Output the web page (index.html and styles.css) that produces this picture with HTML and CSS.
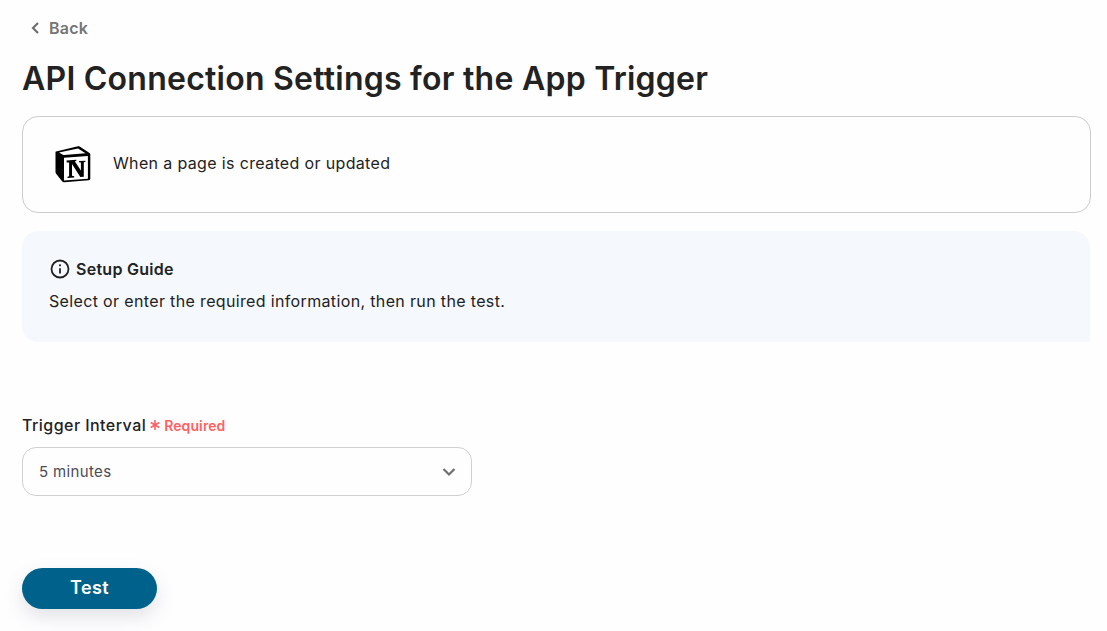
FILE: index.html
```html
<!DOCTYPE html>
<html lang="en">
<head>
<meta charset="utf-8">
<title>API Connection Settings</title>
<link rel="stylesheet" href="styles.css">
</head>
<body>
<main class="page">
  <a class="back">
    <svg class="back-icon" viewBox="0 0 10 14" width="10" height="14"><path d="M8 2 3 7l5 5" fill="none" stroke="#6f6f6f" stroke-width="2.200"/></svg>
    <span>Back</span>
  </a>
  <h1 class="title">API Connection Settings for the App Trigger</h1>
  <section class="app-card">
    <svg class="notion" viewBox="0 0 38 39" width="38" height="39">
      <path d="M2 6.500 24 1.300c.6-.1 1.200 0 1.700.3l9.800 6.400c.6.400.8.900.8 1.500v24c0 1-.6 1.600-1.500 1.700l-24.500 2c-.9.100-1.500-.1-2-.7l-6-7.500C1.800 28.300 1.500 27.700 1.500 27V8c0-.7 0-1.300.5-1.500Z" fill="#000"/>
      <path d="M5 7.400 24 3.500l7.500 4.700-21.300 1.700c-.8.100-1.300 0-1.800-.3Z" fill="#fff"/>
      <path d="M10 12.700 33.900 11v22.800l-23.900 1.800Z" fill="#fff"/>
      <path d="M12.600 15.400 22.300 14.800v1.100l-1.500.3 6.100 9.300v-7.900l-1.800-.3v-1.200l6.300-.4v1.200l-1.600.3v14.600l-3.500.2-8.300-12.900v11.700l2.200.5v1.200l-6.700.4v-1.200l1.600-.4V17.600l-2.400-.2Z" fill="#000"/>
    </svg>
    <span class="app-text">When a page is created or updated</span>
  </section>
  <section class="guide">
    <div class="guide-head">
      <svg viewBox="0 0 20 20" width="20" height="20"><circle cx="10" cy="10" r="8.500" fill="none" stroke="#222" stroke-width="1.800"/><circle cx="10" cy="6.300" r="1.100" fill="#222"/><path d="M10 9.200v5.200" stroke="#222" stroke-width="1.800"/></svg>
      <strong>Setup Guide</strong>
    </div>
    <p class="guide-text">Select or enter the required information, then run the test.</p>
  </section>
  <div class="field">
    <div class="label-row">
      <span class="label">Trigger Interval</span>
      <span class="required"><svg viewBox="0 0 10 10" width="10" height="10"><path d="M5 0v10M.7 2.500l8.600 5M9.300 2.500l-8.600 5" stroke="#ff6264" stroke-width="1.600"/></svg>Required</span>
    </div>
    <div class="select">
      <span>5 minutes</span>
      <svg viewBox="0 0 14 10" width="14" height="10"><path d="M1.500 2 7 7.500 12.500 2" fill="none" stroke="#6f6f6f" stroke-width="2.200"/></svg>
    </div>
  </div>
  <button class="test" type="button">Test</button>
</main>
</body>
</html>
```
FILE: styles.css
```css
* { box-sizing: border-box; }
html, body { margin: 0; height: 100%; }
body {
  background: #fffeff;
  color: #222;
  font-family: Inter, "Liberation Sans", sans-serif;
  overflow: hidden;
}
.page {
  padding: 18px 16px 0 22px;
  display: flex;
  flex-direction: column;
  align-items: stretch;
}
.back {
  display: flex;
  align-items: center;
  gap: 9px;
  height: 20px;
  margin-left: 8px;
  font-size: 16px;
  font-weight: 600;
  letter-spacing: 0.25px;
  color: #757575;
}
.back-icon { flex: none; }
.title {
  margin: 21px 0 0;
  font-size: 32px;
  line-height: 40px;
  font-weight: 600;
  color: #222;
  letter-spacing: 0.24px;
}
.app-card {
  margin-top: 17px;
  height: 97px;
  display: flex;
  align-items: center;
  gap: 21px;
  padding-left: 31px;
  border: 1px solid #cccccc;
  border-radius: 16px;
  background: #fffeff;
}
.notion { flex: none; }
.app-text { font-size: 16px; letter-spacing: 0.35px; color: #222; margin-bottom: 3px; }
.guide {
  margin-top: 18px;
  margin-right: 1px;
  height: 111px;
  padding: 28px 27px;
  background: #f5f8fc;
  border-radius: 16px 16px 0 16px / 16px;
}
.guide-head {
  display: flex;
  align-items: center;
  gap: 6px;
  height: 20px;
  padding-left: 1px;
  font-size: 16px;
}
.guide-head strong { font-weight: 600; letter-spacing: 0.27px; }
.guide-text {
  margin: 12px 0 0;
  font-size: 16px;
  line-height: 20px;
  letter-spacing: 0.35px;
  color: #222;
}
.field { margin-top: 73px; }
.label-row { display: flex; align-items: center; gap: 4px; height: 20px; }
.label { font-size: 16px; font-weight: 500; letter-spacing: 0.45px; color: #222; }
.required {
  display: flex;
  align-items: center;
  gap: 4px;
  font-size: 14px;
  font-weight: 600;
  color: #ff6264;
  letter-spacing: 0.1px;
}
.select {
  margin-top: 12px;
  width: 450px;
  height: 49px;
  display: flex;
  align-items: center;
  justify-content: space-between;
  padding: 0 15px 0 16px;
  border: 1px solid #cfcfd8;
  border-radius: 14px;
  font-size: 15px;
  letter-spacing: 0.35px;
  color: #4b4b55;
}
.test {
  margin-top: 72px;
  width: 135px;
  height: 41px;
  border: 0;
  border-radius: 21px;
  background: #00628b;
  color: #fff;
  font-family: inherit;
  font-size: 18px;
  font-weight: 600;
  letter-spacing: 0.4px;
  padding-bottom: 3px;
  box-shadow: 0 8px 20px rgba(40, 60, 80, 0.14);
}
```
